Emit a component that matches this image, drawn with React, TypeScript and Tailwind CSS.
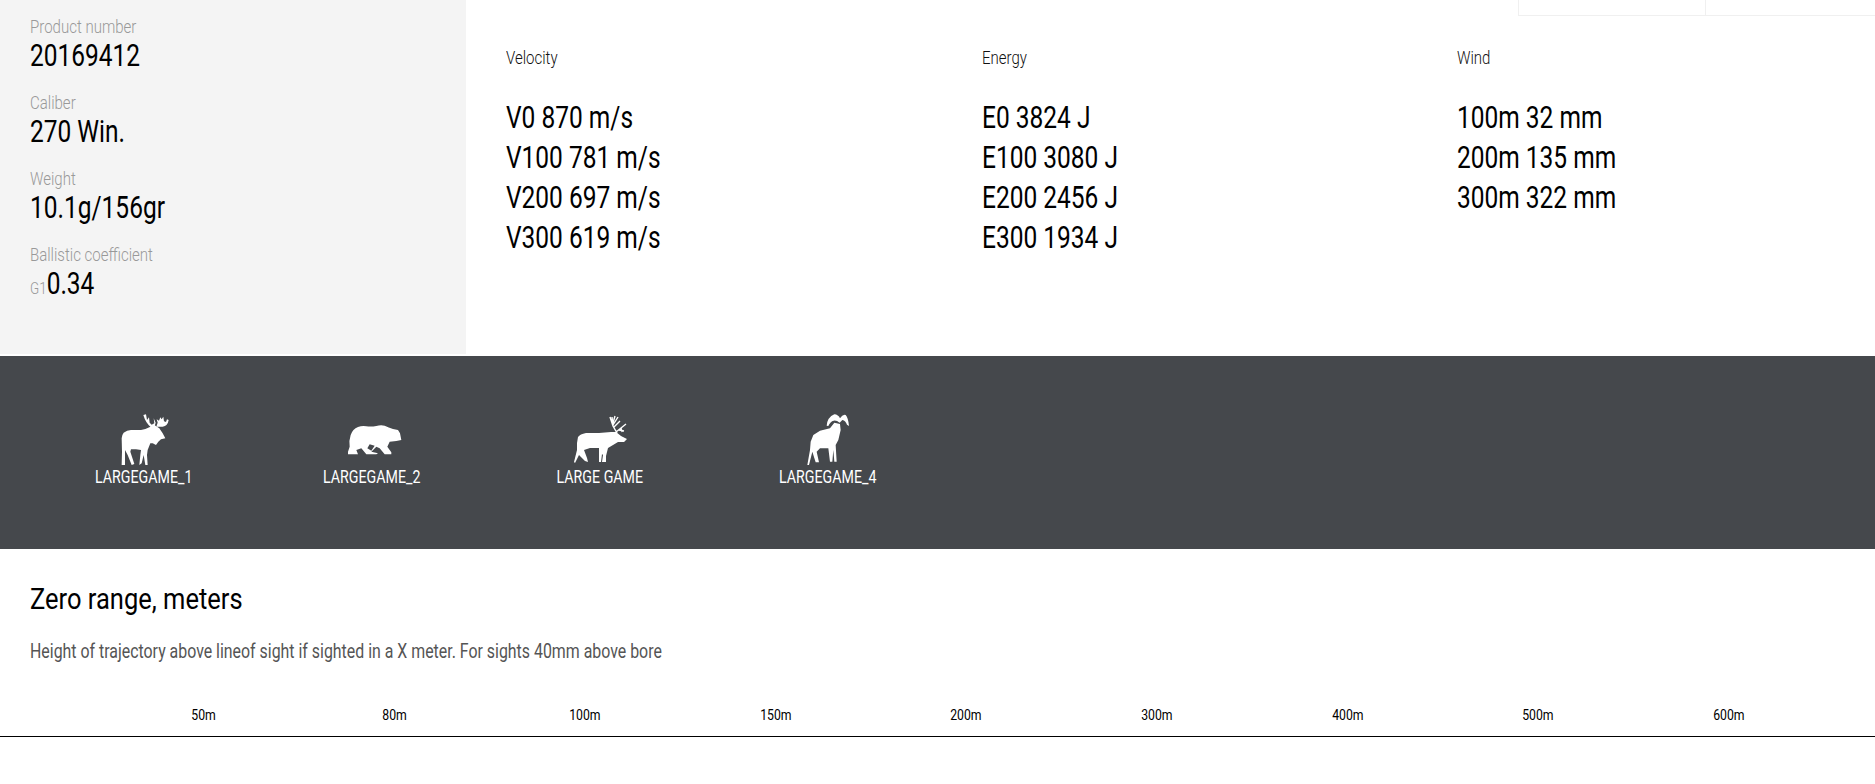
import type { ReactNode } from "react";

const specs = [
  ["Product number", "20169412"],
  ["Caliber", "270 Win."],
  ["Weight", "10.1g/156gr"],
];
const cols = [
  { t: "Velocity", r: ["V0 870 m/s", "V100 781 m/s", "V200 697 m/s", "V300 619 m/s"] },
  { t: "Energy", r: ["E0 3824 J", "E100 3080 J", "E200 2456 J", "E300 1934 J"] },
  { t: "Wind", r: ["100m 32 mm", "200m 135 mm", "300m 322 mm"] },
];
const ranges = ["50m", "80m", "100m", "150m", "200m", "300m", "400m", "500m", "600m"];

function N({ children }: { children: ReactNode }) {
  return <span className="inline-block origin-left scale-x-[0.79] whitespace-nowrap">{children}</span>;
}
function C({ children }: { children: ReactNode }) {
  return <span className="inline-block origin-center scale-x-[0.79] whitespace-nowrap">{children}</span>;
}

const Moose = () => (
  <svg width="70" height="60" viewBox="-2 0 70 60" fill="#fff">
    <g transform="scale(0.3333)">
      <path d="M32 85Q34 72 38 68Q48 60 60 60L90 60Q104 58 115 52L130 45L145 55L155 70L163 85L150 88L142 95L135 105L125 100L118 100L110 120L108 135L110 165L103 165L98 135L92 160L85 165L88 135L90 120L75 118L60 118L58 125L70 162L62 165L50 135L42 120L42 165L32 165L33 125Z" />
      <path d="M97 15L105 13L108 30L114 22L116 38L122 44L130 40L128 25L134 38L130 52L122 54Q104 40 97 15Z" />
      <path d="M136 50L140 38L137 28L144 32L148 22L152 28L157 20L159 34L165 36L168 28L173 30Q170 48 155 50Z" />
    </g>
  </svg>
);
const Bear = () => (
  <svg width="70" height="60" viewBox="-1 -5 70 60" fill="#fff">
    <g transform="scale(0.3333)">
      <path fillRule="evenodd" d="M30 110L35 95Q32 78 38 60Q44 42 60 36Q72 32 85 34Q100 36 115 33Q128 29 140 32Q152 38 165 42L180 45L186 55L190 75L175 78L155 80L148 95L160 112L160 118L140 118L125 100L115 95L100 110L120 115L115 118L85 118L70 100L55 105L60 118L30 118ZM88 100L95 88L110 92L100 107Z" />
    </g>
  </svg>
);
const Caribou = () => (
  <svg width="70" height="60" viewBox="-1 0 70 60" fill="#fff">
    <path d="M12 27Q14 24 20 23L33 23L45 22L50 22L55 26L61 29L58 32L52 32L47 35L42 38L40 46L40 52L36 52L37 45L36 44L35 52L33 52L33 38L24 38L18 40L21 48L22 52L19 51L13 45L9 53L8 52L11 40L11 33Z" />
    <path d="M51 23L47 16L44 7M47 16L46 7M47 13L49 6M47 15L52 7M48 17L54 11M50 22L55 18L60 14M53 20L58 21M55 18L56 22" fill="none" stroke="#fff" strokeWidth="1.4" />
  </svg>
);
const Ram = () => (
  <svg width="70" height="60" viewBox="-2 0 70 60" fill="#fff">
    <g transform="scale(0.3333)">
      <path d="M47 95L55 75L75 62L105 55L118 38L135 42L137 60L130 90L122 105L125 155L118 155L115 120L112 155L105 155L100 115L75 115L65 125L72 157L62 157L52 125L42 165L37 165L45 120Z" />
      <path d="M95 47Q97 22 118 13Q130 14 135 25Q143 12 152 15Q160 24 162 48L156 44Q152 32 142 30L134 38Q124 30 116 32Q106 34 100 48Z" />
    </g>
  </svg>
);

const games = [
  { n: "LARGEGAME_1", I: Moose },
  { n: "LARGEGAME_2", I: Bear },
  { n: "LARGE GAME", I: Caribou },
  { n: "LARGEGAME_4", I: Ram },
];

export default function App() {
  return (
    <div className="h-[784px] overflow-hidden bg-white font-['Roboto',sans-serif] text-black">
      <div className="flex h-[354px]">
        <div className="w-[466px] shrink-0 bg-[#f4f4f4] pl-[30px] pt-[15px]">
          {specs.map(([a, b]) => (
            <div key={a} className="h-[76px]">
              <div className="text-[19px] font-light leading-[24px] text-[#999]"><N>{a}</N></div>
              <div className="text-[31px] leading-[34px]"><N>{b}</N></div>
            </div>
          ))}
          <div className="text-[19px] font-light leading-[24px] text-[#999]"><N>Ballistic coefficient</N></div>
          <div className="text-[31px] leading-[34px]">
            <N><span className="text-[17px] font-light text-[#999]">G1</span>0.34</N>
          </div>
        </div>
        <div className="flex min-w-0 flex-1 flex-col">
          <div className="flex h-[16px] justify-end">
            <div className="w-[187px] border-b-[1px] border-l-[1px] border-[#f0f0f0]" />
            <div className="w-[170px] border-b-[1px] border-l-[1px] border-[#f0f0f0]" />
          </div>
          <div className="grid grid-cols-[475.5px_475.5px_1fr] pl-[40px] pt-[30px]">
            {cols.map((c) => (
              <div key={c.t}>
                <div className="text-[19px] font-light leading-[24px] text-[#111]"><N>{c.t}</N></div>
                <div className="mt-[28px] text-[31px] leading-[40px]">
                  {c.r.map((x) => <div key={x}><N>{x}</N></div>)}
                </div>
              </div>
            ))}
          </div>
        </div>
      </div>
      <div className="mt-[2px] flex h-[193px] bg-[#45484c] pl-[30px] pt-[54px] text-white">
        {games.map(({ n, I }) => (
          <div key={n} className="flex w-[228px] flex-col items-center">
            <I />
            <div className="-mt-[5px] text-[18px] leading-[24px]"><C>{n}</C></div>
          </div>
        ))}
      </div>
      <div className="pl-[30px] pt-[32px] text-[30px] leading-[36px]">
        <span className="inline-block origin-left scale-x-[0.85] whitespace-nowrap">Zero range, meters</span>
      </div>
      <div className="pl-[30px] pt-[20px] text-[20px] leading-[28px] text-[#555]">
        <span className="inline-block origin-left scale-x-[0.795] whitespace-nowrap">Height of trajectory above lineof sight if sighted in a X meter. For sights 40mm above bore</span>
      </div>
      <div className="mt-[36px] flex h-[36px] border-b-[1px] border-black pl-[108px] pt-[4px]">
        {ranges.map((r) => (
          <div key={r} className="w-[190.7px] text-center text-[15.5px] leading-[20px]"><C>{r}</C></div>
        ))}
      </div>
    </div>
  );
}
